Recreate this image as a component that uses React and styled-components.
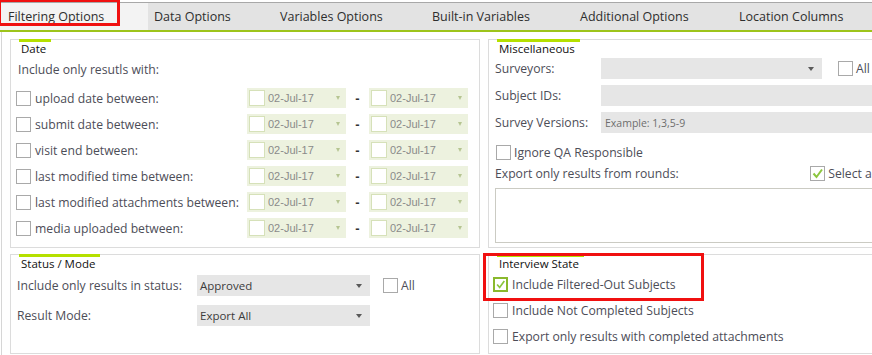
import React from 'react';
import styled, { createGlobalStyle, css } from 'styled-components';

const GlobalStyle = createGlobalStyle`
  html, body {
    margin: 0;
    padding: 0;
    background: #ffffff;
    overflow: hidden;
  }
  body {
    font-family: "Open Sans", "Noto Sans", sans-serif;
    font-size: 12.2px;
    color: #4d4d57;
  }
`;

const tabs = [
  { label: 'Filtering Options', width: 148, active: true },
  { label: 'Data Options', width: 126 },
  { label: 'Variables Options', width: 152 },
  { label: 'Built-in Variables', width: 148 },
  { label: 'Additional Options', width: 159 },
  { label: 'Location Columns', width: 160 },
];

const dateRows = [
  'upload date between:',
  'submit date between:',
  'visit end between:',
  'last modified time between:',
  'last modified attachments between:',
  'media uploaded between:',
];

function Check({ checked, highlight }) {
  return (
    <Box $highlight={highlight}>
      {checked && (
        <svg width="13" height="13" viewBox="0 0 13 13">
          <path d="M2.5 6.5 L5.5 10 L11 2.5" fill="none" stroke="#8cc63f" strokeWidth="2" />
        </svg>
      )}
    </Box>
  );
}

function DatePicker() {
  return (
    <Picker>
      <PickerSquare />
      <PickerText>02-Jul-17</PickerText>
      <PickerArrow />
    </Picker>
  );
}

function Select({ value, width }) {
  return (
    <SelectBox $width={width}>
      <span>{value}</span>
      <Arrow />
    </SelectBox>
  );
}

export default function App() {
  return (
    <Page>
      <GlobalStyle />
      <TabBar>
        {tabs.map((t) => (
          <Tab key={t.label} $active={t.active} $width={t.width}>
            {t.label}
            {t.active && <Marker $left={-2} $top={-4} $w={122} $h={27} />}
          </Tab>
        ))}
      </TabBar>
      <Content>
        <Grid>
          <Group>
            <Legend>Date</Legend>
            <Intro>Include only resutls with:</Intro>
            <DateRows>
              {dateRows.map((label) => (
                <DateRow key={label}>
                  <CheckLabel>
                    <Check />
                    <span>{label}</span>
                  </CheckLabel>
                  <DatePicker />
                  <Dash>-</Dash>
                  <DatePicker />
                </DateRow>
              ))}
            </DateRows>
          </Group>

          <Group $pad={6}>
            <Legend $shift={2}>Miscellaneous</Legend>
            <MiscForm>
              <FieldLabel>Surveyors:</FieldLabel>
              <FieldLine>
                <Select value="" width={221} />
                <CheckLabel $gap={3}>
                  <Check />
                  <span>All</span>
                </CheckLabel>
              </FieldLine>
              <FieldLabel>Subject IDs:</FieldLabel>
              <Input />
              <FieldLabel>Survey Versions:</FieldLabel>
              <Input>
                <Placeholder>Example: 1,3,5-9</Placeholder>
              </Input>
            </MiscForm>
            <IgnoreRow>
              <CheckLabel $gap={3}>
                <Check />
                <span>Ignore QA Responsible</span>
              </CheckLabel>
            </IgnoreRow>
            <RoundsHeader>
              <span>Export only results from rounds:</span>
              <CheckLabel $gap={3}>
                <Check checked />
                <span>Select all</span>
              </CheckLabel>
            </RoundsHeader>
            <TextArea />
          </Group>

          <Group $pad={6}>
            <Legend $shift={2}>Status / Mode</Legend>
            <StatusForm>
              <FieldLabel>Include only results in status:</FieldLabel>
              <FieldLine $gap={13}>
                <Select value="Approved" width={173} />
                <CheckLabel $gap={3}>
                  <Check />
                  <span>All</span>
                </CheckLabel>
              </FieldLine>
              <FieldLabel>Result Mode:</FieldLabel>
              <FieldLine>
                <Select value="Export All" width={173} />
              </FieldLine>
            </StatusForm>
          </Group>

          <Group $pad={4}>
            <Marker $left={-6} $top={-2} $w={221} $h={48} />
            <Legend $shift={4}>Interview State</Legend>
            <StateList>
              <CheckLabel $gap={4}>
                <Check checked highlight />
                <span>Include Filtered-Out Subjects</span>
              </CheckLabel>
              <CheckLabel $gap={4}>
                <Check />
                <span>Include Not Completed Subjects</span>
              </CheckLabel>
              <CheckLabel $gap={4}>
                <Check />
                <span>Export only results with completed attachments</span>
              </CheckLabel>
            </StateList>
          </Group>
        </Grid>
      </Content>
    </Page>
  );
}

const Page = styled.div`
  width: 960px;
  height: 355px;
  padding-top: 2px;
  box-sizing: border-box;
`;

const TabBar = styled.div`
  display: flex;
  height: 27px;
  border-top: 1px solid #a8a8a8;
  border-bottom: 2px solid #9dc41b;
  background: #e3e3e3;
`;

const Tab = styled.div`
  position: relative;
  flex: none;
  width: ${(p) => p.$width}px;
  box-sizing: border-box;
  padding-left: ${(p) => (p.$active ? 8 : 6)}px;
  display: flex;
  align-items: center;
  font-size: 12.5px;
  color: #2e2e2e;
  background: ${(p) => (p.$active ? '#f3f3f3' : 'transparent')};
`;

const Marker = styled.div`
  position: absolute;
  left: ${(p) => p.$left}px;
  top: ${(p) => p.$top}px;
  width: ${(p) => p.$w}px;
  height: ${(p) => p.$h}px;
  border: 3px solid #f01010;
  box-sizing: border-box;
  pointer-events: none;
  z-index: 2;
`;

const Content = styled.div`
  margin-left: 1px;
  border-left: 1px solid #d6d6d6;
  padding: 7px 0 0 8px;
  height: 323px;
  box-sizing: border-box;
`;

const Grid = styled.div`
  display: grid;
  grid-template-columns: 470px 470px;
  grid-template-rows: 209px 100px;
  column-gap: 8px;
  row-gap: 6px;
`;

const Group = styled.div`
  position: relative;
  border: 1px solid #dcdcdc;
  padding: 0 ${(p) => p.$pad ?? 5}px;
  box-sizing: border-box;
`;

const Legend = styled.div`
  display: block;
  width: fit-content;
  margin: -1px 0 0 ${(p) => p.$shift ?? 3}px;
  padding: 0 5px 0 2px;
  border-top: 3px solid #b5e000;
  font-size: 11.5px;
  line-height: 14px;
  color: #111111;
`;

const Intro = styled.div`
  margin: 4px 0 0 2px;
  line-height: 20px;
`;

const DateRows = styled.div`
  margin-top: 5px;
  display: flex;
  flex-direction: column;
`;

const DateRow = styled.div`
  display: grid;
  grid-template-columns: 231px 99px 23px 99px;
  align-items: center;
  height: 26px;
`;

const CheckLabel = styled.label`
  display: flex;
  align-items: center;
  gap: ${(p) => p.$gap ?? 4}px;
  white-space: nowrap;
`;

const Box = styled.span`
  flex: none;
  width: 15px;
  height: 15px;
  box-sizing: border-box;
  display: flex;
  align-items: center;
  justify-content: center;
  background: #ffffff;
  border: 1px solid #a9a9a9;
  ${(p) =>
    p.$highlight &&
    css`
      border: 2px solid #8ab92d;
    `}
`;

const Picker = styled.div`
  display: flex;
  align-items: center;
  height: 20px;
  padding: 0 6px 0 2px;
  background: #edf2df;
  box-sizing: border-box;
`;

const PickerSquare = styled.span`
  width: 16px;
  height: 16px;
  box-sizing: border-box;
  background: #ffffff;
  border: 1px solid #d6e1b9;
`;

const PickerText = styled.span`
  flex: 1;
  margin-left: 3px;
  font-family: "Liberation Sans", Arial, sans-serif;
  font-size: 11px;
  color: #8a8a8a;
`;

const PickerArrow = styled.span`
  width: 0;
  height: 0;
  border-left: 2.5px solid transparent;
  border-right: 2.5px solid transparent;
  border-top: 4px solid #b6c592;
`;

const Dash = styled.span`
  text-align: center;
  font-family: "Liberation Sans", Arial, sans-serif;
  font-weight: bold;
  font-size: 13px;
  color: #333333;
`;

const MiscForm = styled.div`
  display: grid;
  grid-template-columns: 106px 1fr;
  grid-auto-rows: 21px;
  row-gap: 6px;
  align-items: center;
  margin-top: 2px;
`;

const StatusForm = styled(MiscForm)`
  grid-template-columns: 180px 1fr;
  row-gap: 9px;
  margin-top: 4px;
`;

const FieldLabel = styled.span`
  white-space: nowrap;
`;

const FieldLine = styled.div`
  display: flex;
  align-items: center;
  gap: ${(p) => p.$gap ?? 16}px;
`;

const SelectBox = styled.div`
  width: ${(p) => p.$width}px;
  height: 21px;
  box-sizing: border-box;
  padding: 0 8px 0 3px;
  display: flex;
  align-items: center;
  justify-content: space-between;
  background: #e6e6e6;
  font-size: 11.5px;
  color: #3c3c3c;
`;

const Arrow = styled.span`
  width: 0;
  height: 0;
  border-left: 3px solid transparent;
  border-right: 3px solid transparent;
  border-top: 4px solid #5a5a5a;
`;

const Input = styled.div`
  height: 21px;
  background: #e6e6e6;
  display: flex;
  align-items: center;
  padding-left: 4px;
`;

const Placeholder = styled.span`
  font-size: 10.5px;
  color: #6e6e6e;
`;

const IgnoreRow = styled.div`
  display: flex;
  align-items: center;
  height: 20px;
  margin-top: 9px;
  padding-left: 1px;
`;

const RoundsHeader = styled.div`
  display: flex;
  align-items: center;
  justify-content: space-between;
  height: 20px;
  margin-top: 1px;
  padding-right: 60px;
  & > label {
    margin-left: auto;
    margin-right: 13px;
  }
`;

const TextArea = styled.div`
  margin-top: 5px;
  height: 55px;
  border: 1px solid #cbcbc3;
  box-sizing: border-box;
`;

const StateList = styled.div`
  display: flex;
  flex-direction: column;
  & > label {
    height: 26px;
  }
`;
